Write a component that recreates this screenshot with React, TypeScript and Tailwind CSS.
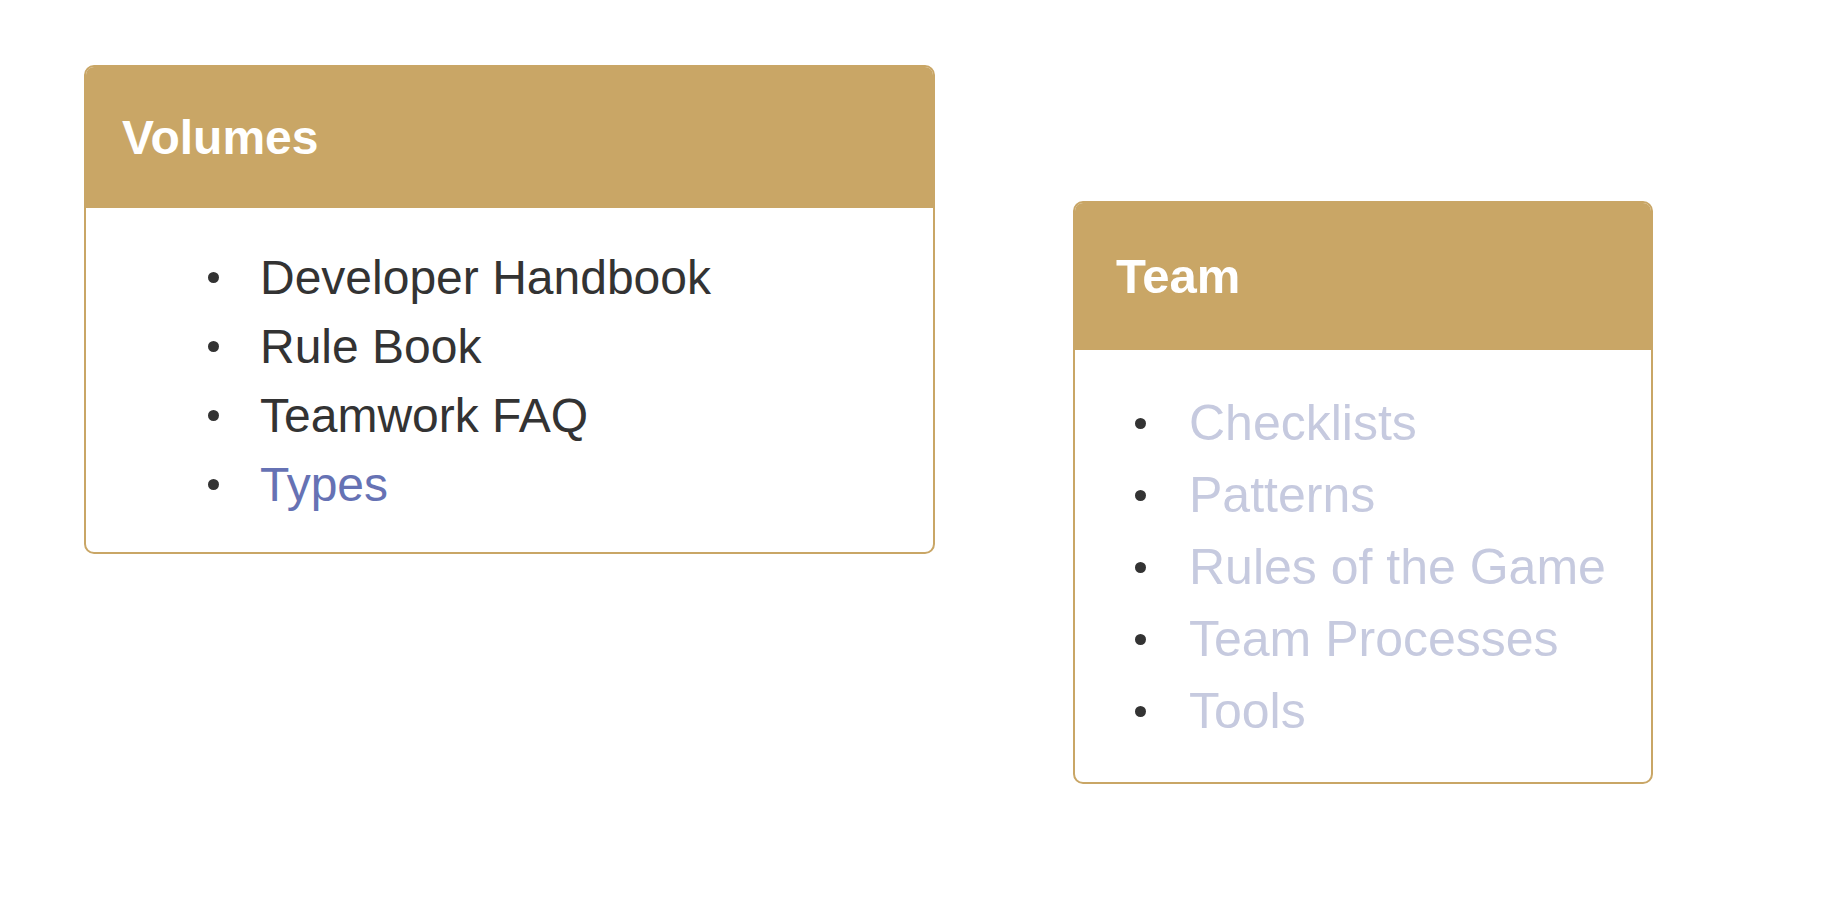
import React from 'react'

type Item = { label: string; tone: 'dark' | 'link' | 'muted' }

const VOLUMES: Item[] = [
  { label: 'Developer Handbook', tone: 'dark' },
  { label: 'Rule Book',          tone: 'dark' },
  { label: 'Teamwork FAQ',       tone: 'dark' },
  { label: 'Types',              tone: 'link' },
]

const TEAM: Item[] = [
  { label: 'Checklists',         tone: 'muted' },
  { label: 'Patterns',           tone: 'muted' },
  { label: 'Rules of the Game',  tone: 'muted' },
  { label: 'Team Processes',     tone: 'muted' },
  { label: 'Tools',              tone: 'muted' },
]

const TONE = {
  dark:  'text-[#333333]',
  link:  'text-[#6672b4]',
  muted: 'text-[#c6cadf]',
}

export default function App() {
  return (
    <div
      className="min-h-screen bg-white flex items-start gap-[138px] pl-[84px] pt-[65px]"
      style={{ fontFamily: '"Liberation Sans", Arial, sans-serif' }}
    >
      {/* Volumes */}
      <section className="w-[851px] border-2 border-[#c9a666] rounded-[10px] overflow-hidden bg-white">
        <div className="h-[141px] bg-[#c9a666] flex items-center pl-[36px]">
          <h2 className="text-white font-bold text-[48px] leading-none">Volumes</h2>
        </div>
        <ul className="pl-[122px] pt-[35px] pb-[33px] text-[48px] leading-[69px]">
          {VOLUMES.map((item) => (
            <li key={item.label} className="flex items-center gap-[41px]">
              <span className="w-[11px] h-[11px] rounded-full bg-[#333333] shrink-0" />
              <span className={TONE[item.tone]}>{item.label}</span>
            </li>
          ))}
        </ul>
      </section>

      {/* Team */}
      <section className="mt-[136px] w-[580px] border-2 border-[#c9a666] rounded-[10px] overflow-hidden bg-white">
        <div className="h-[147px] bg-[#c9a666] flex items-center pl-[41px]">
          <h2 className="text-white font-bold text-[49px] leading-none">Team</h2>
        </div>
        <ul className="pl-[60px] pt-[37px] pb-[35px] text-[50px] leading-[72px]">
          {TEAM.map((item) => (
            <li key={item.label} className="flex items-center gap-[43px]">
              <span className="w-[11px] h-[11px] rounded-full bg-[#333333] shrink-0" />
              <span className={TONE[item.tone]}>{item.label}</span>
            </li>
          ))}
        </ul>
      </section>
    </div>
  )
}
